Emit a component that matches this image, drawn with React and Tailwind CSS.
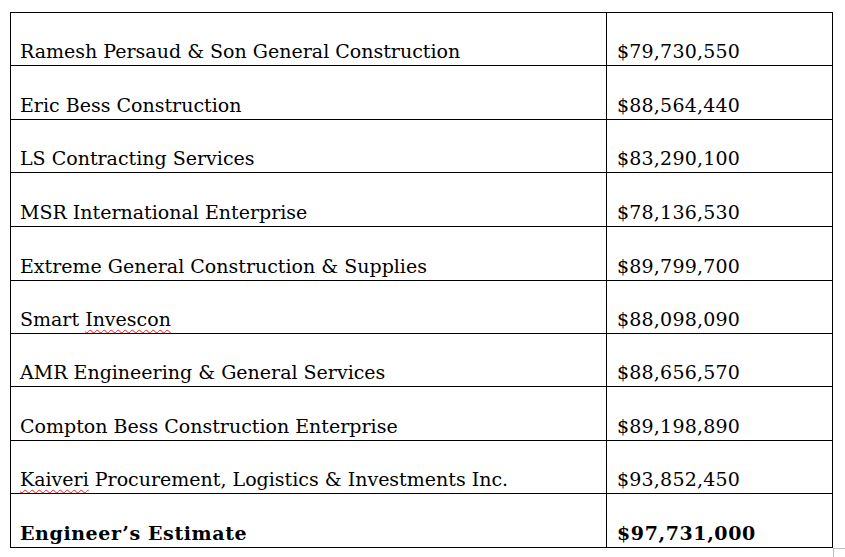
import React from "react";

const rows = [
  ["Ramesh Persaud & Son General Construction", "$79,730,550", "h-[53px]"],
  ["Eric Bess Construction", "$88,564,440", "h-[54px]"],
  ["LS Contracting Services", "$83,290,100", "h-[53px]"],
  ["MSR International Enterprise", "$78,136,530", "h-[54px]"],
  ["Extreme General Construction & Supplies", "$89,799,700", "h-[54px]"],
  ["Smart |Invescon", "$88,098,090", "h-[53px]"],
  ["AMR Engineering & General Services", "$88,656,570", "h-[53px]"],
  ["Compton Bess Construction Enterprise", "$89,198,890", "h-[54px]"],
  ["|Kaiveri| Procurement, Logistics & Investments Inc.", "$93,852,450", "h-[53px]"],
];

function Name({ text }) {
  if (text.startsWith("Smart |")) {
    return (
      <>
        Smart{" "}
        <span className="underline decoration-wavy decoration-[#e02020] decoration-1 underline-offset-[3px]">Invescon</span>
      </>
    );
  }
  if (text.startsWith("|Kaiveri|")) {
    return (
      <>
        <span className="underline decoration-wavy decoration-[#e02020] decoration-1 underline-offset-[3px]">Kaiveri</span>
        {text.slice(9)}
      </>
    );
  }
  return <>{text}</>;
}

export default function App() {
  return (
    <div className="relative w-[845px] h-[557px] bg-white overflow-hidden pt-[12px] pl-[10px] text-black [font-family:'DejaVu_Serif','Liberation_Serif',serif]">
      <div className="w-[823px] border-t border-l border-black">
        {rows.map(([n, v, h], i) => (
          <div key={i} className={`flex ${h} border-b border-black`}>
            <div className="w-[596px] shrink-0 border-r border-black flex items-end pl-[9px] pb-[4px] text-[19px] leading-none">
              <span className="whitespace-nowrap"><Name text={n} /></span>
            </div>
            <div className="flex-1 border-r border-black flex items-end pl-[10px] pb-[4px] text-[19px] leading-none tracking-[0.2px]">
              {v}
            </div>
          </div>
        ))}
        <div className="flex h-[54px] border-b border-black font-bold tracking-[0.6px]">
          <div className="w-[596px] shrink-0 border-r border-black flex items-end pl-[9px] pb-[4px] text-[19px] leading-none">
            Engineer’s Estimate
          </div>
          <div className="flex-1 border-r border-black flex items-end pl-[10px] pb-[4px] text-[19px] leading-none">
            $97,731,000
          </div>
        </div>
      </div>
      <div className="absolute left-[833px] top-[548px] w-[20px] h-[20px] border-t border-l border-[#bdbdbd]" />
    </div>
  );
}
